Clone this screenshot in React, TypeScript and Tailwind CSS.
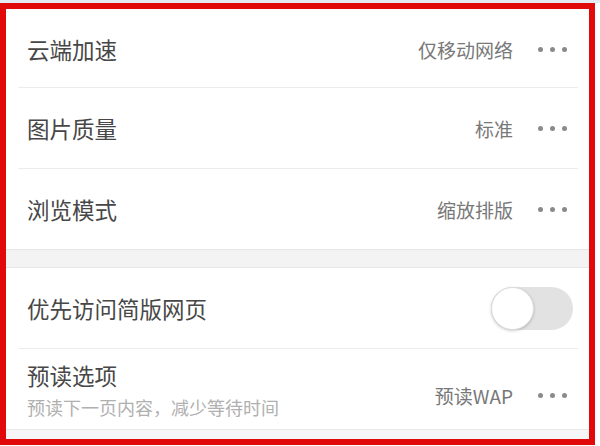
import * as React from "react"

const font = { fontFamily: '"Noto Sans CJK SC", "Noto Sans", sans-serif' }

function Dots() {
  return (
    <div className="flex items-center gap-[7px]">
      <span className="w-[5px] h-[5px] rounded-full bg-[#8a8a8a]" />
      <span className="w-[5px] h-[5px] rounded-full bg-[#8a8a8a]" />
      <span className="w-[5px] h-[5px] rounded-full bg-[#8a8a8a]" />
    </div>
  )
}

function Divider() {
  return <div className="h-px bg-[#ececec] ml-[12px] mr-[11px]" />
}

function OptionRow({ label, value }: { label: string; value: string }) {
  return (
    <div className="h-[80px] flex items-center justify-between pl-[21px] pr-[22px]">
      <span className="text-[22.5px] text-[#474747] leading-none">{label}</span>
      <div className="flex items-center gap-[25px]">
        <span className="text-[19px] text-[#787878] leading-none">{value}</span>
        <Dots />
      </div>
    </div>
  )
}

export default function App() {
  return (
    <div className="w-[600px] h-[446px] bg-white overflow-hidden" style={font}>
      <div className="h-[3px] bg-[#e4ebf2]" />
      <div className="w-[595px] h-[442px] border-[6px] border-[#e00a0a] bg-white flex flex-col">
        <div className="h-[78px] flex items-center justify-between pl-[21px] pr-[22px] pt-[2px]">
          <span className="text-[22.5px] text-[#474747] leading-none">云端加速</span>
          <div className="flex items-center gap-[25px]">
            <span className="text-[19px] text-[#787878] leading-none">仅移动网络</span>
            <Dots />
          </div>
        </div>
        <Divider />
        <OptionRow label="图片质量" value="标准" />
        <Divider />
        <OptionRow label="浏览模式" value="缩放排版" />

        <div className="h-[19px] bg-[#f3f3f3] border-y border-[#e6e6e6]" />

        <div className="h-[80px] flex items-center justify-between pl-[21px] pr-[16px]">
          <span className="text-[22.5px] text-[#474747] leading-none">优先访问简版网页</span>
          <div className="relative w-[82px] h-[43px] rounded-full bg-[#e2e2e2]">
            <div className="absolute left-0 top-0 w-[43px] h-[43px] rounded-full bg-white border border-[#dcdcdc] shadow-[0_1px_3px_rgba(0,0,0,0.2)]" />
          </div>
        </div>
        <Divider />
        <div className="h-[80px] flex items-center justify-between pl-[21px] pr-[22px]">
          <div className="flex flex-col gap-[12px] pt-[2px]">
            <span className="text-[22.5px] text-[#474747] leading-none">预读选项</span>
            <span className="text-[18px] text-[#b0b0b0] leading-none">预读下一页内容，减少等待时间</span>
          </div>
          <div className="flex items-center gap-[25px] pt-[12px]">
            <span className="text-[19px] text-[#787878] leading-none">预读WAP</span>
            <Dots />
          </div>
        </div>
        <div className="h-px bg-[#e8e8e8]" />
        <div className="flex-1 bg-[#f6f6f8]" />
      </div>
    </div>
  )
}
